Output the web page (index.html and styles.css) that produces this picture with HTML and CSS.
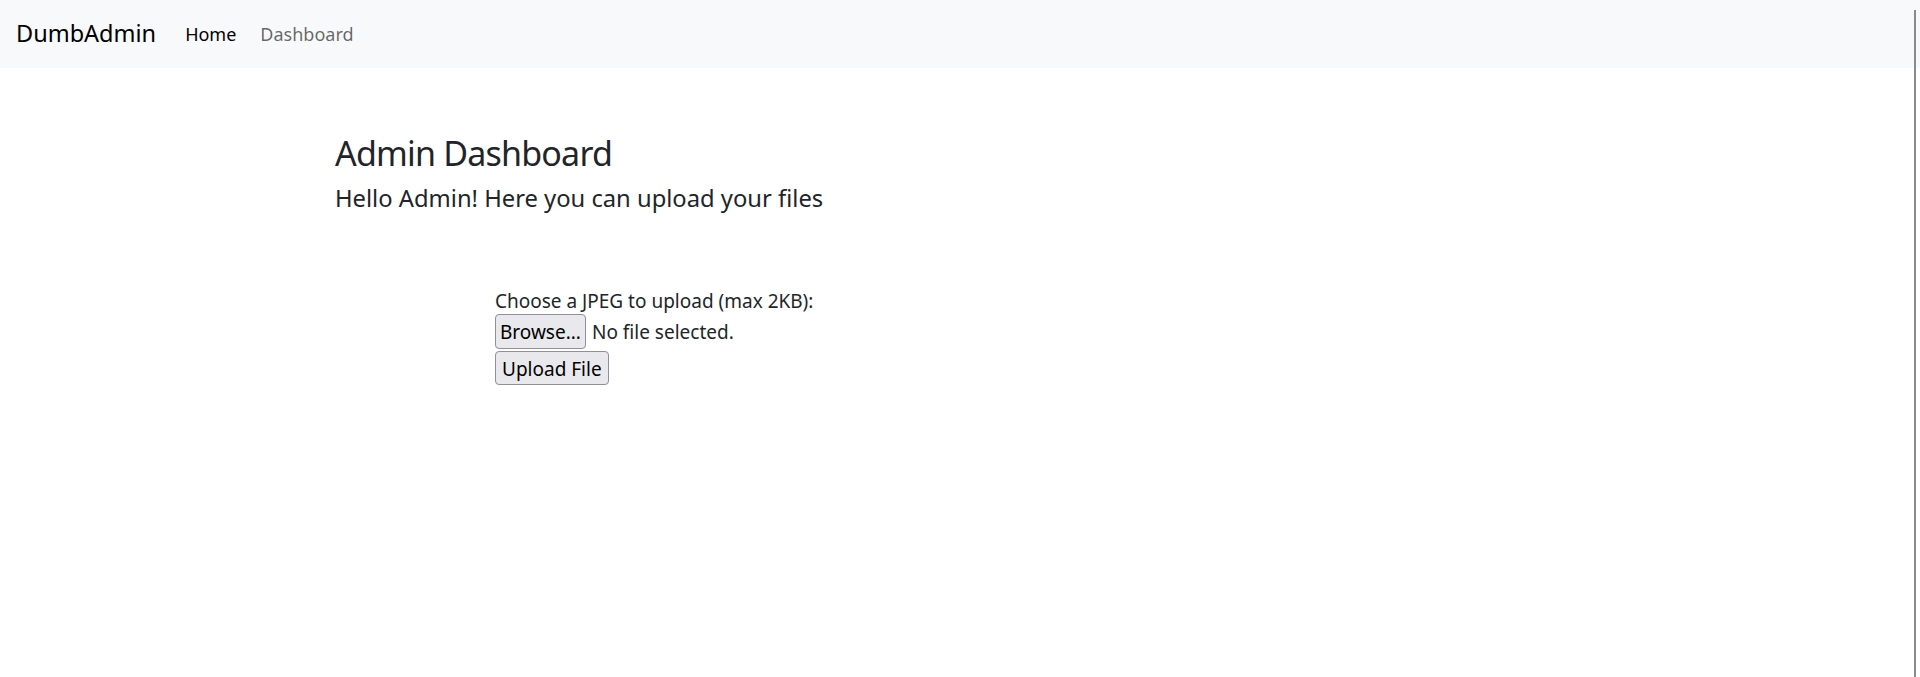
FILE: index.html
```html
<!DOCTYPE html>
<html lang="en">
<head>
<meta charset="utf-8">
<title>DumbAdmin</title>
<link rel="stylesheet" href="styles.css">
</head>
<body>
<nav class="navbar">
  <a class="brand" href="#">DumbAdmin</a>
  <ul class="nav">
    <li><a class="nav-link active" href="#">Home</a></li>
    <li><a class="nav-link" href="#">Dashboard</a></li>
  </ul>
</nav>
<main class="container">
  <h2 class="title">Admin Dashboard</h2>
  <h5 class="subtitle">Hello Admin! Here you can upload your files</h5>
  <form class="upload">
    <label class="label" for="file">Choose a JPEG to upload (max 2KB):</label>
    <div class="file-row">
      <button type="button" class="btn btn-browse">Browse...</button>
      <span class="file-name">No file selected.</span>
    </div>
    <div class="submit-row"><button type="button" class="btn btn-upload">Upload File</button></div>
  </form>
</main>
<div class="scroll-thumb"></div>
</body>
</html>
```
FILE: styles.css
```css
html, body {
  margin: 0;
  padding: 0;
}
body {
  font-family: "Noto Sans", "Open Sans", sans-serif;
  font-size: 19px;
  color: #212529;
  background: #fff;
}
.navbar {
  height: 68px;
  background: #f8f9fa;
  display: flex;
  align-items: center;
  padding: 0 16px;
  box-sizing: border-box;
}
.brand {
  font-size: 23.5px;
  color: #000;
  text-decoration: none;
  margin-right: 17px;
  line-height: 1.5;
}
.nav {
  list-style: none;
  margin: 0;
  padding: 0;
  display: flex;
}
.nav-link {
  display: block;
  padding: 8px 12px;
  font-size: 18px;
  color: rgba(0, 0, 0, 0.6);
  text-decoration: none;
}
.nav-link.active {
  color: #000;
}
.container {
  padding: 0 0 0 335px;
}
.title {
  margin: 65px 0 0;
  font-size: 34px;
  letter-spacing: -0.8px;
  font-weight: 400;
  line-height: 1.2;
}
.subtitle {
  margin: 10px 0 0;
  font-size: 23.75px;
  font-weight: 400;
  line-height: 1.2;
}
.upload {
  margin: 77px 0 0 160px;
  font-size: 19px;
}
.label {
  display: block;
  line-height: 24px;
}
.file-row {
  display: flex;
  align-items: center;
  gap: 6px;
  margin-top: 1px;
}
.submit-row {
  margin-top: 2px;
}
.btn {
  font-family: inherit;
  font-size: 19px;
  color: #000;
  background: #e9e9ed;
  border: 1px solid #8f8f9d;
  border-radius: 4px;
  padding: 1px 6px 0;
  height: 35px;
  margin: 0;
}
.btn-browse {
  padding: 1px 4px 0;
}
.btn-upload {
  height: 34px;
}
.scroll-thumb {
  position: fixed;
  top: 10px;
  bottom: 0;
  right: 4px;
  width: 2px;
  background: #8a8a8a;
}
```
